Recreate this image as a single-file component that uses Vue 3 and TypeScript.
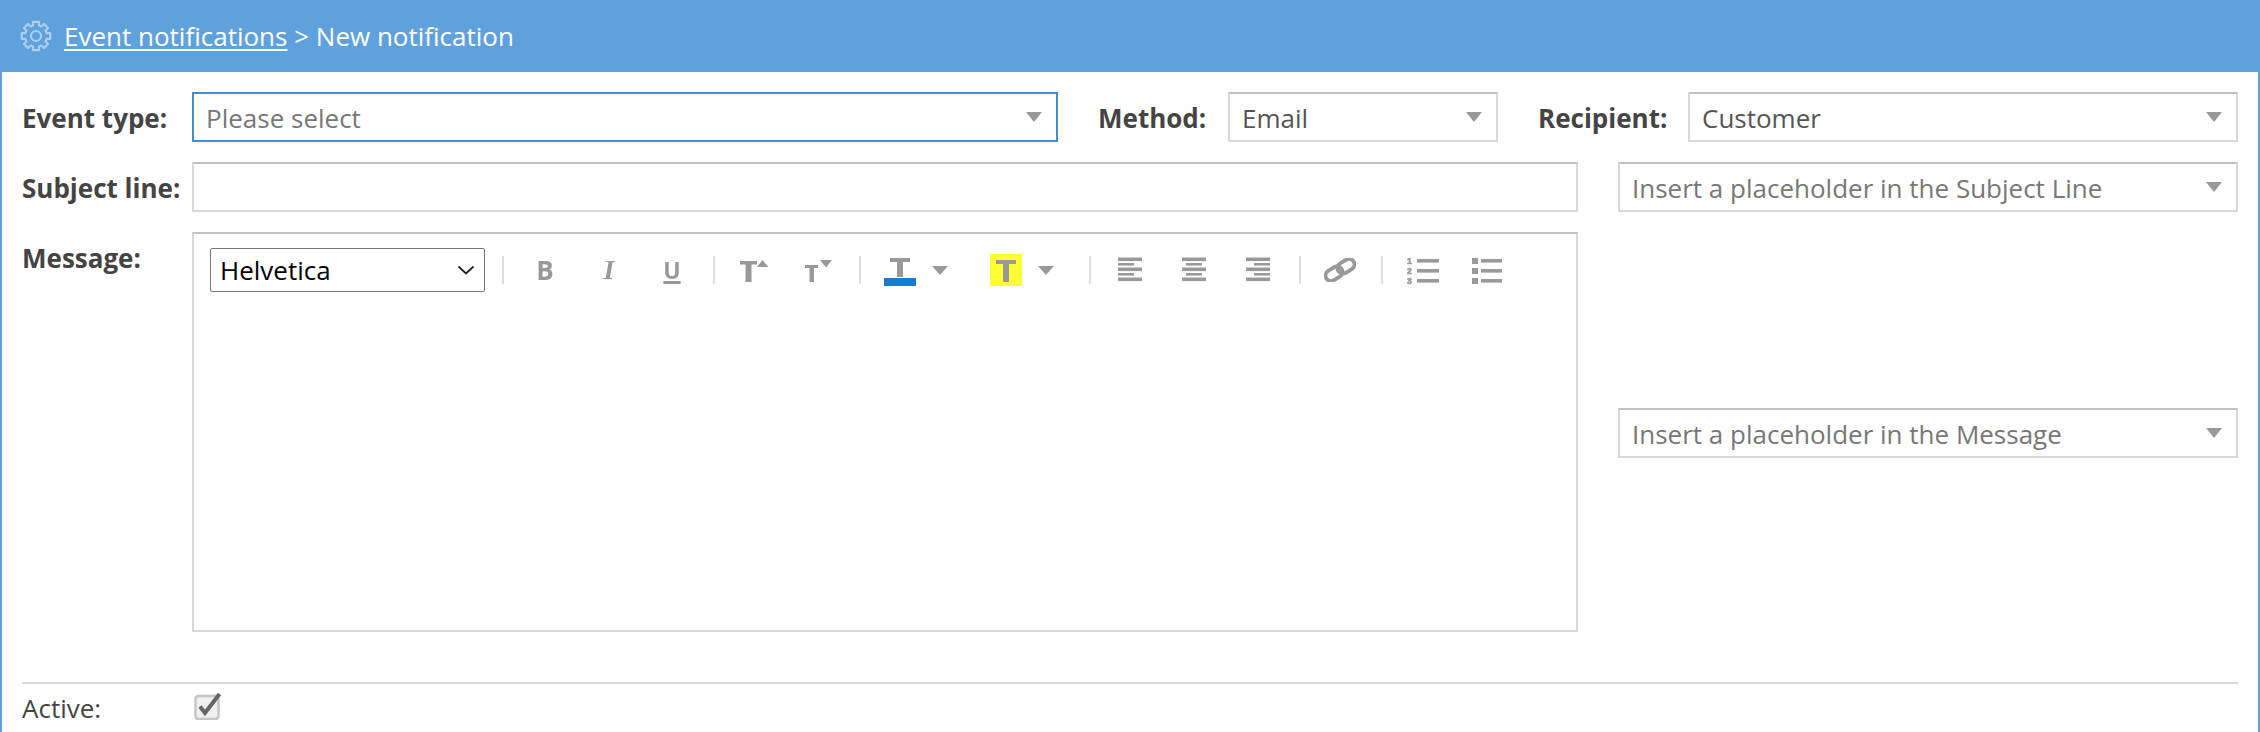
<script setup lang="ts">
const gearPath = (() => {
  const teeth = 8
  const cx = 16
  const cy = 16
  const outer = 14.5
  const inner = 11
  const pts: string[] = []
  for (let i = 0; i < teeth; i++) {
    const a = (i * 2 * Math.PI) / teeth - Math.PI / 2
    const w = 0.2
    const g = 0.27
    const coords: [number, number][] = [
      [inner, a - g],
      [outer, a - w],
      [outer, a + w],
      [inner, a + g],
    ]
    for (const [r, t] of coords) {
      pts.push(`${(cx + r * Math.cos(t)).toFixed(2)} ${(cy + r * Math.sin(t)).toFixed(2)}`)
    }
  }
  return 'M' + pts.join('L') + 'Z'
})()

const alignLines = {
  left: 0,
  center: 4,
  right: 8,
}
</script>

<template>
  <div class="panel">
    <header class="bar">
      <svg class="gear" width="32" height="32" viewBox="0 0 32 32" fill="none">
        <path :d="gearPath" stroke="#a9cff1" stroke-width="2.2" stroke-linejoin="round" />
        <circle cx="16" cy="16" r="5" stroke="#a9cff1" stroke-width="2.2" />
      </svg>
      <span class="crumb"><a class="crumb-link">Event notifications</a> &gt; New notification</span>
    </header>

    <main class="form">
      <div class="row first">
        <label class="label strong">Event type:</label>
        <div class="select focused event">
          <span class="ph">Please select</span><i class="caret"></i>
        </div>
        <label class="label strong method-label">Method:</label>
        <div class="select method">
          <span>Email</span><i class="caret"></i>
        </div>
        <label class="label strong recipient-label">Recipient:</label>
        <div class="select grow">
          <span>Customer</span><i class="caret"></i>
        </div>
      </div>

      <div class="row">
        <label class="label strong">Subject line:</label>
        <input class="text-input" type="text" />
        <div class="select grow side">
          <span class="ph">Insert a placeholder in the Subject Line</span><i class="caret"></i>
        </div>
      </div>

      <div class="row top">
        <label class="label strong message-label">Message:</label>
        <div class="editor">
          <div class="toolbar">
            <div class="font-select">
              <span>Helvetica</span>
              <svg class="chev" width="18" height="10" viewBox="0 0 18 10" fill="none">
                <path d="M1.5 1.5 9 8.5l7.5-7" stroke="#222" stroke-width="1.8" />
              </svg>
            </div>
            <i class="sep s1"></i>
            <span class="glyph bold">B</span>
            <span class="glyph ital">I</span>
            <span class="glyph under">U</span>
            <i class="sep s2"></i>

            <svg class="ico up" width="30" height="24" viewBox="0 0 30 24">
              <path d="M0 3h17v3.5h-5.5V24h-6V6.500H0Z" fill="#999" />
              <path d="M17 9 22.500 2l6 7Z" fill="#999" />
            </svg>
            <svg class="ico down" width="30" height="24" viewBox="0 0 30 24">
              <path d="M2 7h13v3h-4v14H6.500V10H2Z" fill="#999" />
              <path d="M17 2h12l-6 7.500Z" fill="#999" />
            </svg>
            <i class="sep s3"></i>

            <svg class="ico fore" width="32" height="32" viewBox="0 0 32 32">
              <path d="M6 4h20v4h-7v15h-6V8H6Z" fill="#999" />
              <rect y="24" width="32" height="8" fill="#1b7cc8" />
            </svg>
            <i class="tri t1"></i>
            <svg class="ico back" width="32" height="32" viewBox="0 0 32 32">
              <rect width="32" height="32" fill="#ffff33" />
              <path d="M6 6h20v4h-7v18h-6V10H6Z" fill="#999" />
            </svg>
            <i class="tri t2"></i>
            <i class="sep s4"></i>

            <svg
              v-for="(offset, name) in alignLines"
              :key="name"
              class="ico align"
              :class="'al-' + name"
              width="24"
              height="26"
              viewBox="0 0 24 26"
              fill="#999"
            >
              <rect y="0.500" width="24" height="3.600" />
              <rect :x="offset" y="6" width="16" height="2.600" />
              <rect y="10.500" width="24" height="3.600" />
              <rect :x="offset" y="16" width="16" height="2.600" />
              <rect y="20.500" width="24" height="3.600" />
            </svg>
            <i class="sep s5"></i>

            <svg class="ico link" width="32" height="24" viewBox="0 0 32 24" fill="none">
              <g stroke="#999" stroke-width="3.800" transform="rotate(-32 16 12)">
                <rect x="0" y="6.500" width="18" height="11" rx="5.500" />
                <rect x="14" y="6.500" width="18" height="11" rx="5.500" />
              </g>
            </svg>
            <i class="sep s6"></i>

            <svg class="ico ol" width="32" height="32" viewBox="0 0 32 32" fill="#999">
              <text class="num" x="0" y="10">1</text>
              <text class="num" x="0" y="20">2</text>
              <text class="num" x="0" y="30">3</text>
              <rect x="10" y="5" width="22" height="3.600" />
              <rect x="10" y="15" width="22" height="3.600" />
              <rect x="10" y="25" width="22" height="3.600" />
            </svg>
            <svg class="ico ul" width="30" height="28" viewBox="0 0 30 28" fill="#999">
              <rect y="2" width="6" height="6" />
              <rect y="12" width="6" height="6" />
              <rect y="22" width="6" height="6" />
              <rect x="9" y="3" width="21" height="3.600" />
              <rect x="9" y="13" width="21" height="3.600" />
              <rect x="9" y="23" width="21" height="3.600" />
            </svg>
          </div>
        </div>
        <div class="side-col">
          <div class="select">
            <span class="ph">Insert a placeholder in the Message</span><i class="caret"></i>
          </div>
        </div>
      </div>

      <hr class="rule" />

      <div class="active-row">
        <label class="label">Active:</label>
        <svg class="check" width="30" height="28" viewBox="0 0 30 28" fill="none">
          <rect x="2.500" y="4" width="23" height="23" rx="3" fill="#f0f0f0" stroke="#c4c4c4" stroke-width="2.400" />
          <path d="M7 14.500l5 6.500L26.500 2" stroke="#666" stroke-width="4" />
        </svg>
      </div>
    </main>
  </div>
</template>

<style>
html,
body {
  margin: 0;
  background: #fff;
  overflow: hidden;
}
</style>

<style scoped>
.panel {
  box-sizing: border-box;
  height: 732px;
  overflow: hidden;
  border-left: 2px solid #5fa1dd;
  border-right: 2px solid #5fa1dd;
  font-family: "Open Sans", "Noto Sans", sans-serif;
  font-size: 26px;
  color: #444;
  background: #fff;
}
.bar {
  height: 72px;
  margin: 0 -2px;
  padding-left: 20px;
  display: flex;
  align-items: center;
  background: #5fa1dd;
  color: #fff;
}
.gear {
  margin-right: 12px;
  flex: none;
}
.crumb {
  line-height: 30px;
}
.crumb-link {
  text-decoration: underline;
  text-underline-offset: 3px;
}
.form {
  padding: 20px 20px 0;
}
.row {
  display: flex;
  align-items: center;
  margin-bottom: 20px;
}
.row.top {
  align-items: flex-start;
  margin-bottom: 0;
}
.label {
  flex: none;
  width: 170px;
  line-height: 30px;
  white-space: nowrap;
}
.strong {
  font-weight: 700;
  color: #444;
  padding-top: 1px;
}
.message-label {
  margin-top: 10px;
}
.method-label {
  width: 130px;
  margin-left: 40px;
}
.recipient-label {
  width: 150px;
  margin-left: 40px;
}
.select {
  position: relative;
  box-sizing: border-box;
  height: 50px;
  padding: 2px 40px 0 12px;
  display: flex;
  align-items: center;
  background: #fff;
  border: 2px solid #d9d9d9;
  border-top-color: #c0c0c0;
  color: #555;
  white-space: nowrap;
}
.focused {
  border-color: #3d8fd1;
}
.event {
  width: 866px;
  flex: none;
}
.method {
  width: 270px;
  flex: none;
}
.grow {
  flex: 1;
}
.side {
  margin-left: 40px;
}
.ph {
  color: #777;
}
.caret {
  position: absolute;
  right: 14px;
  top: 18px;
  width: 0;
  height: 0;
  border-left: 8px solid transparent;
  border-right: 8px solid transparent;
  border-top: 10px solid #999;
}
.text-input {
  box-sizing: border-box;
  flex: none;
  width: 1386px;
  height: 50px;
  margin: 0;
  padding: 0 13px;
  border: 2px solid #d9d9d9;
  border-top-color: #c0c0c0;
  border-radius: 0;
  outline: none;
  background: #fff;
}
.editor {
  box-sizing: border-box;
  flex: none;
  width: 1386px;
  height: 400px;
  padding: 14px 16px 0;
  border: 2px solid #d9d9d9;
  border-top-color: #c0c0c0;
}
.toolbar {
  display: flex;
  align-items: center;
  height: 44px;
}
.font-select {
  box-sizing: border-box;
  flex: none;
  width: 275px;
  height: 44px;
  padding: 0 9px 0 9px;
  display: flex;
  align-items: center;
  justify-content: space-between;
  border: 1px solid #767676;
  border-radius: 2px;
  color: #000;
}
.sep {
  flex: none;
  width: 2px;
  height: 28px;
  background: #ddd;
}
.s1 { margin-left: 17px; }
.s2 { margin-left: 29px; }
.s3 { margin-left: 26px; }
.s4 { margin-left: 35px; }
.s5 { margin-left: 29px; }
.s6 { margin-left: 25px; }
.glyph {
  flex: none;
  width: 24px;
  text-align: center;
  color: #999;
  filter: blur(0.5px);
  line-height: 28px;
}
.bold {
  margin-left: 29px;
  font-size: 26px;
  font-weight: 700;
}
.ital {
  margin-left: 40px;
  font-family: "Liberation Serif", serif;
  font-size: 28px;
  font-weight: 700;
  font-style: italic;
}
.under {
  margin-left: 39px;
  font-size: 23px;
  font-weight: 700;
  text-decoration: underline;
  text-decoration-thickness: 3px;
  text-underline-offset: 2px;
}
.ico {
  flex: none;
  display: block;
  filter: blur(0.5px);
}
.up { margin-left: 25px; }
.down { margin-left: 33px; }
.fore { margin-left: 23px; filter: none; }
.back { margin-left: 42px; filter: none; }
.al-left { margin-left: 27px; }
.al-center { margin-left: 40px; }
.al-right { margin-left: 40px; }
.link { margin-left: 23px; }
.ol { margin-left: 24px; }
.ul { margin-left: 33px; }
.num {
  font-family: "Liberation Sans", sans-serif;
  font-size: 8.6px;
  font-weight: 700;
  stroke: #999;
  stroke-width: 0.6px;
}
.tri {
  flex: none;
  margin-left: 16px;
  width: 0;
  height: 0;
  border-left: 8px solid transparent;
  border-right: 8px solid transparent;
  border-top: 9px solid #999;
}
.t2 { margin-left: 16px; }
.side-col {
  flex: 1;
  margin-left: 40px;
  padding-top: 176px;
}
.rule {
  margin: 50px 0 0;
  height: 2px;
  border: 0;
  background: #d9d9d9;
}
.active-row {
  display: flex;
  align-items: center;
  height: 48px;
}
.check {
  flex: none;
  margin-left: 1px;
  margin-top: -4px;
  filter: blur(0.4px);
}
</style>
